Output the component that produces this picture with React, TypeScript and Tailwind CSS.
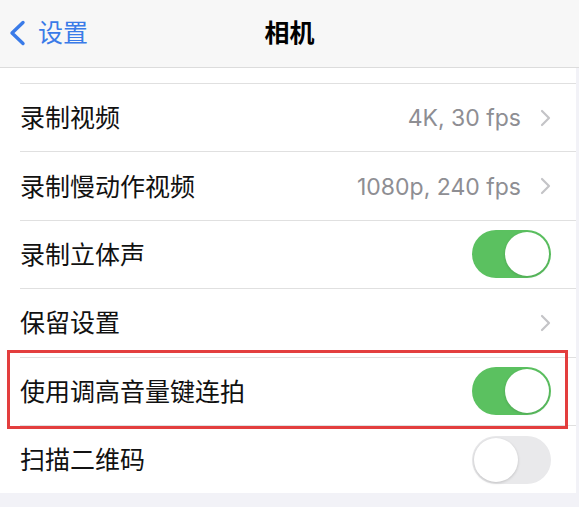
import React from "react";

const font = { fontFamily: '"Inter", "Noto Sans CJK SC", "Noto Sans", sans-serif' };

function Chevron() {
  return (
    <svg width="12" height="18" viewBox="0 0 12 18" className="shrink-0">
      <path d="M3 2 L10 9 L3 16" fill="none" stroke="#c4c4c7" strokeWidth="2.2" strokeLinecap="round" strokeLinejoin="round" />
    </svg>
  );
}

function Toggle({ on }: { on: boolean }) {
  return on ? (
    <div className="w-[79px] h-[48px] rounded-full bg-[#5bc160] flex items-center justify-end pr-[2px] shrink-0">
      <div className="w-[44px] h-[44px] rounded-full bg-white shadow-[0_1px_3px_rgba(0,0,0,0.15)]" />
    </div>
  ) : (
    <div className="w-[79px] h-[48px] rounded-full bg-[#e9e9eb] flex items-center justify-start pl-[2px] shrink-0">
      <div className="w-[44px] h-[44px] rounded-full bg-white shadow-[0_1px_3px_rgba(0,0,0,0.18)]" />
    </div>
  );
}

type Row = { label: string; value?: string; chevron?: boolean; toggle?: boolean };

const rows: Row[] = [
  { label: "录制视频", value: "4K, 30 fps", chevron: true },
  { label: "录制慢动作视频", value: "1080p, 240 fps", chevron: true },
  { label: "录制立体声", toggle: true },
  { label: "保留设置", chevron: true },
  { label: "使用调高音量键连拍", toggle: true },
  { label: "扫描二维码", toggle: false },
];

export default function App() {
  return (
    <div className="relative w-[579px] h-[507px] overflow-hidden bg-[#f2f2f7]" style={font}>
      {/* Nav bar */}
      <div className="relative h-[68px] bg-[#f7f7f7] border-b border-[#dcdcdc] flex items-center">
        <div className="flex items-center pl-[8px] gap-[12px] text-[#3a7be8] -mt-[1px]">
          <svg width="18" height="26" viewBox="0 0 18 26">
            <path d="M15 2.5 L4 13 L15 23.5" fill="none" stroke="#3a7be8" strokeWidth="3.4" strokeLinecap="round" strokeLinejoin="round" />
          </svg>
          <span className="text-[25px] leading-none">设置</span>
        </div>
        <div className="absolute left-0 right-0 top-0 bottom-0 flex items-center justify-center pointer-events-none -mt-[1px]">
          <span className="text-[25px] font-semibold text-black leading-none">相机</span>
        </div>
      </div>

      {/* List */}
      <div className="bg-white mr-[3px]">
        <div className="h-[15px]" />
        {rows.map((r, i) => (
          <div key={i} className="ml-[20px] h-[68.4px] border-t border-[#e0e0e0] flex items-center pr-[25px]">
            <span className="flex-1 text-[25px] text-[#111] leading-none pt-[2px]">{r.label}</span>
            {r.value && (
              <span className="text-[23px] text-[#8e8e93] leading-none mr-[18px] pt-[2px]">{r.value}</span>
            )}
            {r.chevron && <Chevron />}
            {r.toggle !== undefined && <Toggle on={r.toggle} />}
          </div>
        ))}
      </div>

      {/* Red highlight box */}
      <div className="absolute left-[7px] top-[350px] w-[561px] h-[79px] border-[3px] border-[#e33e3e]" />
    </div>
  );
}
